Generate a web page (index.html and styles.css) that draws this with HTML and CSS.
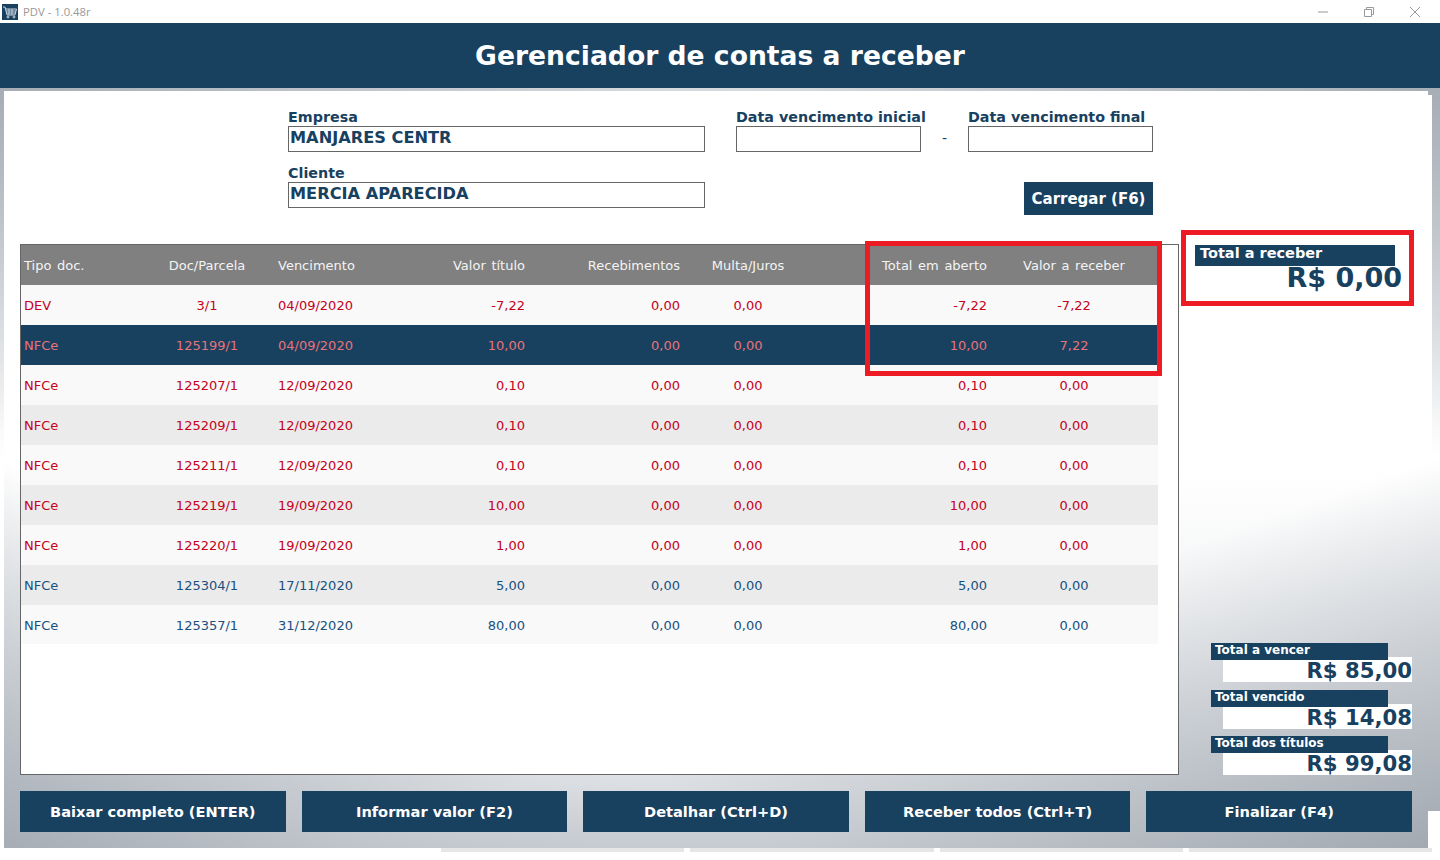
FILE: index.html
```html
<!DOCTYPE html>
<html lang="pt-BR">
<head>
    <meta charset="UTF-8">
    <title>PDV - 1.0.48r</title>
    <link rel="stylesheet" href="styles.css">
</head>
<body>

    <div class="titlebar">
        <div class="app-name">
            <span class="app-icon">
                <svg width="16" height="16" viewBox="0 0 16 16" fill="none" stroke="#c9d6e0" stroke-width="1">
                    <path d="M1 3h2l2 8h8l1.500-6H3.500"/>
                    <path d="M4 7h10M4.500 9h9M7 5v6M10 5v6"/>
                    <circle cx="6" cy="13" r="1"/>
                    <circle cx="12" cy="13" r="1"/>
                </svg>
            </span>
            PDV - 1.0.48r
        </div>
        <div class="window-btns">
            <svg width="12" height="12" viewBox="0 0 12 12" stroke="#999" fill="none"><path d="M1 6h10"/></svg>
            <svg width="12" height="12" viewBox="0 0 12 12" stroke="#999" fill="none"><path d="M1.500 3.500h7v7h-7zM3.500 3.500v-2h7v7h-2"/></svg>
            <svg width="12" height="12" viewBox="0 0 12 12" stroke="#999" fill="none"><path d="M1 1l10 10M11 1L1 11"/></svg>
        </div>
    </div>

    <div class="header">Gerenciador de contas a receber</div>

    <div class="panel">
        <div class="filters">
            <div class="filters-left">
                <div class="field">
                    <label>Empresa</label>
                    <div class="input big">MANJARES CENTR</div>
                </div>
                <div class="field">
                    <label>Cliente</label>
                    <div class="input big">MERCIA APARECIDA</div>
                </div>
            </div>
            <div class="filters-right">
                <div class="dates">
                    <div class="field date">
                        <label>Data vencimento inicial</label>
                        <div class="input"></div>
                    </div>
                    <div class="dash">-</div>
                    <div class="field date">
                        <label>Data vencimento final</label>
                        <div class="input"></div>
                    </div>
                </div>
                <button class="load-btn">Carregar (F6)</button>
            </div>
        </div>

        <div class="middle">
            <div class="table-box">
                <div class="row head">
                    <div class="c1">Tipo doc.</div><div class="c2">Doc/Parcela</div><div class="c3">Vencimento</div><div class="c4">Valor título</div><div class="c5">Recebimentos</div><div class="c6">Multa/Juros</div><div class="c7">Total em aberto</div><div class="c8">Valor a receber</div>
                </div>
                <div class="row red">
                    <div class="c1">DEV</div><div class="c2">3/1</div><div class="c3">04/09/2020</div><div class="c4">-7,22</div><div class="c5">0,00</div><div class="c6">0,00</div><div class="c7">-7,22</div><div class="c8">-7,22</div>
                </div>
                <div class="row selected">
                    <div class="c1">NFCe</div><div class="c2">125199/1</div><div class="c3">04/09/2020</div><div class="c4">10,00</div><div class="c5">0,00</div><div class="c6">0,00</div><div class="c7">10,00</div><div class="c8">7,22</div>
                </div>
                <div class="row red">
                    <div class="c1">NFCe</div><div class="c2">125207/1</div><div class="c3">12/09/2020</div><div class="c4">0,10</div><div class="c5">0,00</div><div class="c6">0,00</div><div class="c7">0,10</div><div class="c8">0,00</div>
                </div>
                <div class="row red alt">
                    <div class="c1">NFCe</div><div class="c2">125209/1</div><div class="c3">12/09/2020</div><div class="c4">0,10</div><div class="c5">0,00</div><div class="c6">0,00</div><div class="c7">0,10</div><div class="c8">0,00</div>
                </div>
                <div class="row red">
                    <div class="c1">NFCe</div><div class="c2">125211/1</div><div class="c3">12/09/2020</div><div class="c4">0,10</div><div class="c5">0,00</div><div class="c6">0,00</div><div class="c7">0,10</div><div class="c8">0,00</div>
                </div>
                <div class="row red alt">
                    <div class="c1">NFCe</div><div class="c2">125219/1</div><div class="c3">19/09/2020</div><div class="c4">10,00</div><div class="c5">0,00</div><div class="c6">0,00</div><div class="c7">10,00</div><div class="c8">0,00</div>
                </div>
                <div class="row red">
                    <div class="c1">NFCe</div><div class="c2">125220/1</div><div class="c3">19/09/2020</div><div class="c4">1,00</div><div class="c5">0,00</div><div class="c6">0,00</div><div class="c7">1,00</div><div class="c8">0,00</div>
                </div>
                <div class="row blue alt">
                    <div class="c1">NFCe</div><div class="c2">125304/1</div><div class="c3">17/11/2020</div><div class="c4">5,00</div><div class="c5">0,00</div><div class="c6">0,00</div><div class="c7">5,00</div><div class="c8">0,00</div>
                </div>
                <div class="row blue last">
                    <div class="c1">NFCe</div><div class="c2">125357/1</div><div class="c3">31/12/2020</div><div class="c4">80,00</div><div class="c5">0,00</div><div class="c6">0,00</div><div class="c7">80,00</div><div class="c8">0,00</div>
                </div>
                <div class="highlight-cols"></div>
            </div>

            <div class="side">
                <div class="total-main">
                    <div class="total-main-label">Total a receber</div>
                    <div class="total-main-value">R$ 0,00</div>
                </div>
                <div class="subtotals">
                    <div class="subtotal">
                        <div class="subtotal-value">R$ 85,00</div>
                        <div class="subtotal-label">Total a vencer</div>
                    </div>
                    <div class="subtotal">
                        <div class="subtotal-value">R$ 14,08</div>
                        <div class="subtotal-label">Total vencido</div>
                    </div>
                    <div class="subtotal">
                        <div class="subtotal-value">R$ 99,08</div>
                        <div class="subtotal-label">Total dos títulos</div>
                    </div>
                </div>
            </div>
        </div>

        <div class="actions">
            <button>Baixar completo (ENTER)</button>
            <button>Informar valor (F2)</button>
            <button>Detalhar (Ctrl+D)</button>
            <button>Receber todos (Ctrl+T)</button>
            <button>Finalizar (F4)</button>
        </div>
    </div>

    <div class="under-tabs">
        <span></span><span></span><span></span><span></span>
    </div>

</body>
</html>
```

FILE: styles.css
```css
* {
    box-sizing: border-box;
}
html, body {
    margin: 0;
    height: 860px;
    overflow: hidden;
}
body {
    font-family: "DejaVu Sans", sans-serif;
    background: #fff;
    color: #18405f;
}
.titlebar {
    height: 23px;
    display: flex;
    justify-content: space-between;
    align-items: center;
    padding: 0 19px 0 2px;
}
.app-name {
    display: flex;
    align-items: center;
    gap: 5px;
    font-family: "Open Sans", sans-serif;
    font-size: 11.300px;
    color: #999;
}
.app-icon {
    width: 16px;
    height: 16px;
    background: #18405f;
    display: block;
}
.app-icon svg {
    display: block;
}
.window-btns {
    display: flex;
    gap: 34px;
}
.header {
    height: 65px;
    background: #18405f;
    color: #fff;
    font-size: 26.600px;
    font-weight: bold;
    display: flex;
    align-items: center;
    justify-content: center;
}
/* white sheet and cut-outs first, then the four grey corners */
.panel {
    width: 1440px;
    height: 760px;
    padding: 3px 0 0 4px;
    background-color: #fff;
    background-repeat: no-repeat;
    background-image:
        linear-gradient(#fff, #fff),
        linear-gradient(#fff, #fff),
        linear-gradient(#fff, #fff),
        linear-gradient(#fff, #fff),
        linear-gradient(#e6e6e6, #e6e6e6),
        linear-gradient(to top right, #a6adb5, rgba(166,173,181,0) 50%),
        linear-gradient(to top left, #a2a9b1, rgba(162,169,177,0) 50%),
        linear-gradient(to bottom right, #a6adb5, rgba(166,173,181,0) 50%),
        linear-gradient(to bottom left, #a6adb5, rgba(166,173,181,0) 50%),
        linear-gradient(to bottom, #dfe2e6 0, #fff 45%, #fff 50%, #dfe2e6 100%);
    background-size:
        1424px 360px,
        4px 355px,
        4px 391px,
        12px 37px,
        4px 29px,
        800px 391px,
        1100px 391px,
        800px 370px,
        800px 370px,
        100% 100%;
    background-position:
        4px 3px,
        1428px 7px,
        0 369px,
        1428px 723px,
        1428px 731px,
        0 369px,
        340px 369px,
        0 0,
        640px 0,
        0 0;
}
.filters {
    display: flex;
    padding-left: 284px;
    height: 150px;
}
.filters-left {
    width: 417px;
    padding-top: 17px;
}
.field label {
    display: block;
    font-size: 14.300px;
    font-weight: bold;
    line-height: 18px;
    white-space: nowrap;
}
.filters-left .field + .field {
    margin-top: 12px;
}
.field.date {
    width: 185px;
}
.input {
    border: 1px solid #666;
    background: #fff;
    height: 26px;
    font-size: 16.200px;
    font-weight: bold;
    line-height: 21px;
    padding-left: 1px;
}
.filters-right {
    margin-left: 31px;
    padding-top: 17px;
    width: 417px;
}
.dates {
    display: flex;
}
.dash {
    width: 47px;
    text-align: center;
    padding-top: 22px;
    font-size: 14px;
}
.load-btn {
    display: block;
    margin: 30px 0 0 288px;
    width: 129px;
    height: 33px;
    border: 0;
    background: #18405f;
    color: #fff;
    font-family: inherit;
    font-size: 15px;
    font-weight: bold;
    padding: 0;
}
.middle {
    display: flex;
    margin-left: 16px;
    height: 550px;
}
.table-box {
    width: 1159px;
    height: 531px;
    margin-top: 3px;
    border: 1px solid #666;
    background: #fff;
    position: relative;
}
.row {
    display: grid;
    grid-template-columns: 120px 132px 157px 95px 155px 136px 171px 171px;
    width: 1137px;
    height: 40px;
    align-items: center;
    font-size: 13px;
    background: #f9f9f9;
}
.row div {
    white-space: nowrap;
}
.row.head {
    background: #808080;
    color: #f4f4f4;
    word-spacing: 1.500px;
}
.row.alt {
    background: #ebebeb;
}
.row.last {
    height: 39px;
    padding-top: 1px;
}
.row.red {
    color: #c4001a;
}
.row.blue {
    color: #18507f;
}
.row.selected {
    background: #18405f;
    color: #e8737a;
}
.c1 {
    padding-left: 3px;
}
.c2, .c6 {
    text-align: center;
}
.c3 {
    padding-left: 5px;
}
.c4, .c5, .c7 {
    text-align: right;
}
.c8 {
    text-align: center;
    padding-left: 3px;
}
.highlight-cols {
    position: absolute;
    left: 844px;
    top: -4px;
    width: 297px;
    height: 135px;
    border: 5px solid #ed1c24;
}
.side {
    width: 233px;
    margin-left: 2px;
    display: flex;
    flex-direction: column;
    justify-content: space-between;
}
.total-main {
    width: 233px;
    height: 76px;
    margin-top: -11px;
    border: 5px solid #ed1c24;
    background: #fff;
    padding: 10px 7px 0 9px;
}
.total-main-label {
    width: 200px;
    height: 21px;
    background: #18405f;
    color: #fff;
    font-size: 14.500px;
    font-weight: bold;
    line-height: 17px;
    padding-left: 5px;
}
.total-main-value {
    font-size: 27px;
    font-weight: bold;
    text-align: right;
    line-height: 24px;
}
.subtotals {
    width: 201px;
    margin-left: 30px;
    padding-bottom: 8.500px;
}
.subtotal {
    position: relative;
    height: 46.500px;
    padding: 14px 0 0 12px;
}
.subtotal-label {
    position: absolute;
    left: 0;
    top: 0;
    width: 177px;
    height: 17px;
    background: #18405f;
    color: #fff;
    font-size: 12px;
    font-weight: bold;
    line-height: 15px;
    padding-left: 4px;
}
.subtotal-value {
    background: #fff;
    height: 25px;
    font-size: 21.200px;
    font-weight: bold;
    line-height: 27px;
    text-align: right;
    overflow: hidden;
}
.actions {
    display: flex;
    gap: 16px;
    margin-left: 16px;
    width: 1392px;
}
.actions button {
    flex: 1;
    height: 41px;
    border: 0;
    background: #18405f;
    color: #fff;
    font-family: inherit;
    font-size: 14.600px;
    font-weight: bold;
    padding-bottom: 2px;
}
.under-tabs {
    display: flex;
    margin-left: 441px;
    width: 991px;
    height: 4px;
    gap: 6px;
}
.under-tabs span {
    flex: 1;
    background: #e6e6e6;
}
```
